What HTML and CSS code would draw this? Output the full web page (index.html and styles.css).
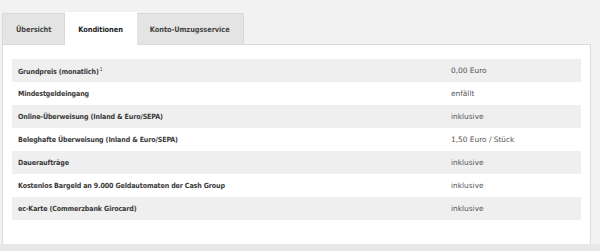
FILE: index.html
```html
<!DOCTYPE html>
<html lang="de">
<head>
<meta charset="utf-8">
<title>Konditionen</title>
<link rel="stylesheet" href="styles.css">
</head>
<body>
<div class="wrap">
  <div class="tabs">
    <div class="tab">Übersicht</div>
    <div class="tab active">Konditionen</div>
    <div class="tab">Konto-Umzugsservice</div>
  </div>
  <div class="panel">
    <div class="table">
      <div class="row alt"><div class="label">Grundpreis (monatlich)<sup>1</sup></div><div class="value">0,00 Euro</div></div>
      <div class="row"><div class="label">Mindestgeldeingang</div><div class="value">enfällt</div></div>
      <div class="row alt"><div class="label">Online-Überweisung (Inland &amp; Euro/SEPA)</div><div class="value">inklusive</div></div>
      <div class="row"><div class="label">Beleghafte Überweisung (Inland &amp; Euro/SEPA)</div><div class="value">1,50 Euro / Stück</div></div>
      <div class="row alt"><div class="label">Daueraufträge</div><div class="value">inklusive</div></div>
      <div class="row"><div class="label">Kostenlos Bargeld an 9.000 Geldautomaten der Cash Group</div><div class="value">inklusive</div></div>
      <div class="row alt"><div class="label">ec-Karte (Commerzbank Girocard)</div><div class="value">inklusive</div></div>
    </div>
  </div>
</div>
</body>
</html>
```
FILE: styles.css
```css
html, body {
  margin: 0;
  padding: 0;
}
body {
  background: #e8e8e8;
  font-family: "DejaVu Sans", Verdana, sans-serif;
  color: #333;
}
.wrap {
  background: #f2f2f2;
  height: 244px;
  padding: 12px 9px 0 2px;
  box-sizing: border-box;
}
.tabs {
  display: flex;
  height: 32px;
  box-sizing: border-box;
}
.tab {
  padding: 0 13px;
  display: flex;
  align-items: center;
  background: #e4e4e4;
  border: 1px solid #d9d9d9;
  border-bottom: none;
  font-family: "DejaVu Sans Condensed", "DejaVu Sans", sans-serif;
  font-size: 7.4px;
  letter-spacing: -0.08px;
  font-weight: bold;
  color: #444;
  margin-top: 1px;
}
.tab + .tab {
  border-left: none;
}
.tab.active {
  background: #fff;
  border-color: #fff;
  margin-top: 0;
  position: relative;
  z-index: 1;
  margin-bottom: -1px;
  color: #222;
}
.panel {
  background: #fff;
  border: 1px solid #dcdcdc;
  padding: 14px 9px 25px 9px;
  height: 201px;
  box-sizing: border-box;
}
.row {
  display: grid;
  grid-template-columns: 433px 1fr;
  height: 23px;
  align-items: center;
}
.row.alt {
  background: #efefef;
}
.label {
  padding: 0 6px;
  font-family: "DejaVu Sans Condensed", "DejaVu Sans", sans-serif;
  font-size: 7.1px;
  letter-spacing: -0.14px;
  font-weight: bold;
  color: #3a3a3a;
}
.label sup {
  font-size: 5px;
  font-weight: normal;
  vertical-align: 3px;
  margin-left: 1px;
}
.value {
  padding: 0 6px;
  font-size: 7.4px;
  color: #555;
}
```
